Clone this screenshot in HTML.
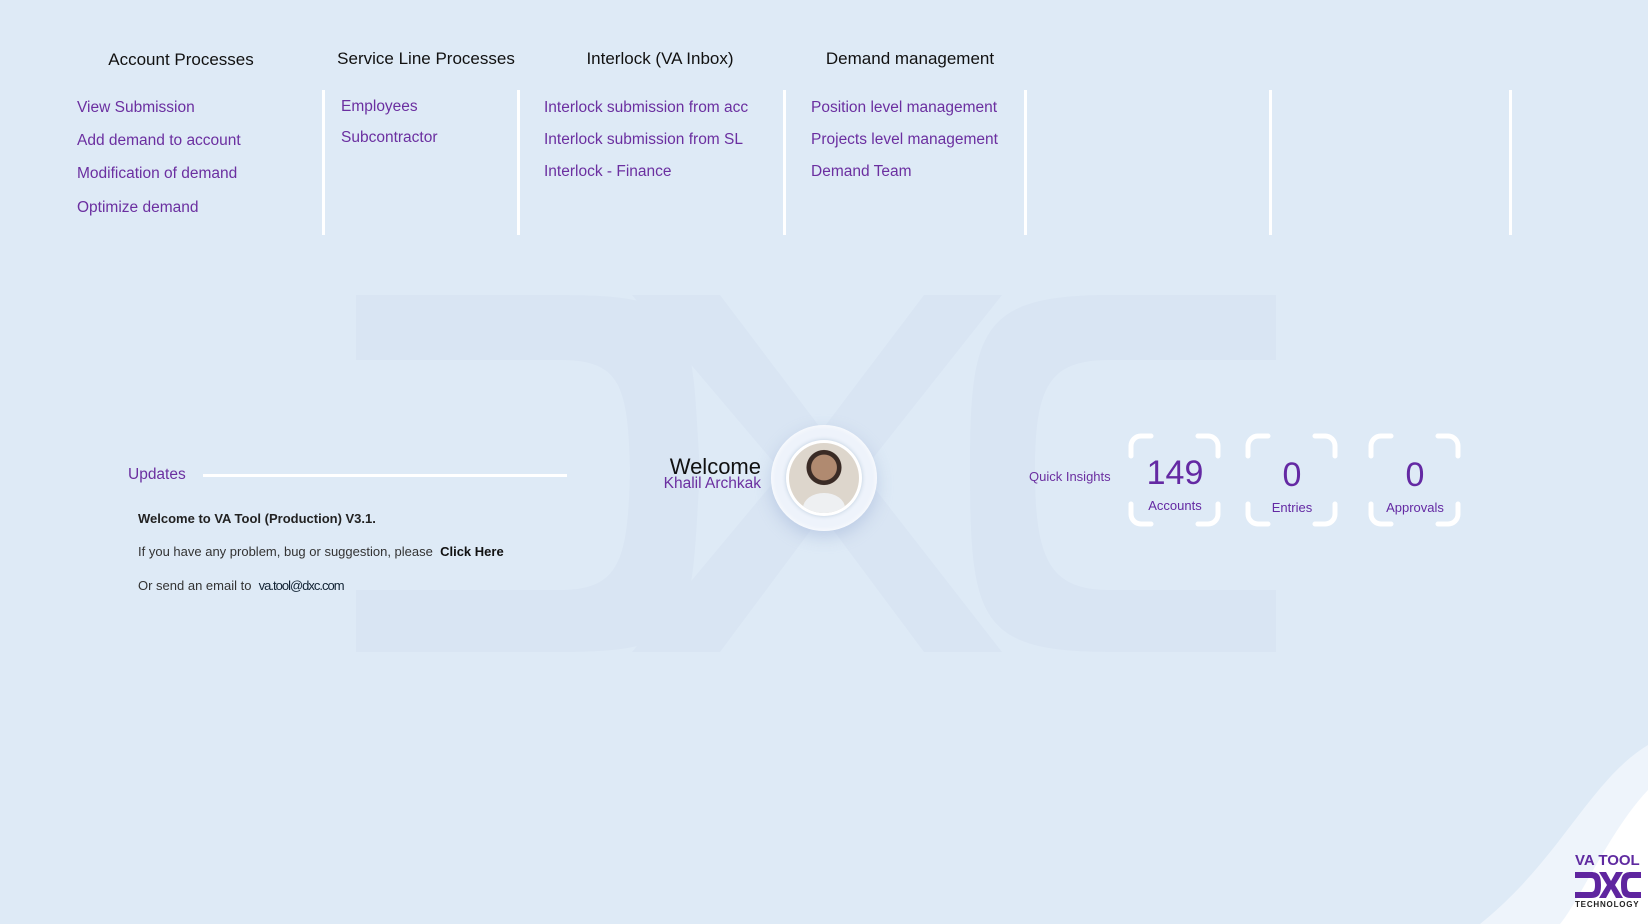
<!DOCTYPE html>
<html><head><meta charset="utf-8"><style>
*{margin:0;padding:0;box-sizing:border-box}
body{width:1648px;height:924px;background:#deeaf6;font-family:"Liberation Sans",sans-serif;position:relative;overflow:hidden}
.a{position:absolute;white-space:nowrap}
.h{font-size:17px;color:#111;transform:translateX(-50%)}
.l{font-size:15.5px;color:#6b2fa0}
.v{position:absolute;width:3px;background:#fff;top:90px;height:145px}
.box{position:absolute;width:92px;height:92px;top:434px}
.num{position:absolute;width:100%;text-align:center;color:#6429a3;font-size:34px;top:22px}
.lab{position:absolute;width:100%;text-align:center;color:#6429a3;font-size:13px;top:62px}
</style></head><body>
<svg class="a" style="left:0;top:0" width="1648" height="924">
<g fill="#d9e5f3">
<path d="M356 295 H560 C700 295 690 320 700 470 C690 625 700 652 560 652 H356 V590 H560 C620 590 628 560 630 470 C628 385 620 360 560 360 H356Z"/>
<path d="M632 295 H720 L822 430 L924 295 H1002 L862 472 L1002 652 H924 L822 515 L720 652 H632 L782 472Z"/>
<path d="M1276 295 H1110 C980 295 970 330 970 470 C970 620 980 652 1110 652 H1276 V590 H1110 C1050 590 1035 560 1035 470 C1035 385 1050 360 1110 360 H1276Z"/>
</g>
<path d="M1648 745 C1590 780 1560 860 1480 924 H1648Z" fill="#eef4fb"/>
<path d="M1648 790 C1610 830 1580 900 1560 924 H1648Z" fill="#fff"/>
</svg>
<div class="a h" style="left:181px;top:50px">Account Processes</div>
<div class="a h" style="left:426px;top:49px">Service Line Processes</div>
<div class="a h" style="left:660px;top:49px">Interlock (VA Inbox)</div>
<div class="a h" style="left:910px;top:49px">Demand management</div>
<div class="a l" style="left:77px;top:99px">View Submission</div>
<div class="a l" style="left:77px;top:132px">Add demand to account</div>
<div class="a l" style="left:77px;top:165px">Modification of demand</div>
<div class="a l" style="left:77px;top:199px">Optimize demand</div>
<div class="a l" style="left:341px;top:98px">Employees</div>
<div class="a l" style="left:341px;top:129px">Subcontractor</div>
<div class="a l" style="left:544px;top:99px">Interlock submission from acc</div>
<div class="a l" style="left:544px;top:131px">Interlock submission from SL</div>
<div class="a l" style="left:544px;top:163px">Interlock - Finance</div>
<div class="a l" style="left:811px;top:99px">Position level management</div>
<div class="a l" style="left:811px;top:131px">Projects level management</div>
<div class="a l" style="left:811px;top:163px">Demand Team</div>
<div class="v" style="left:322px"></div><div class="v" style="left:517px"></div><div class="v" style="left:783px"></div>
<div class="v" style="left:1024px"></div><div class="v" style="left:1269px"></div><div class="v" style="left:1509px"></div>
<div class="a" style="left:128px;top:466px;font-size:15.5px;color:#6b2fa0">Updates</div>
<div class="a" style="left:203px;top:474px;width:364px;height:3px;background:#fff"></div>
<div class="a" style="left:138px;top:511px;font-size:13px;font-weight:bold;color:#222">Welcome to VA Tool (Production) V3.1.</div>
<div class="a" style="left:138px;top:544px;font-size:13px;color:#333">If you have any problem, bug or suggestion, please&nbsp; <b style="color:#111">Click Here</b></div>
<div class="a" style="left:138px;top:578px;font-size:13px;color:#333">Or send an email to&nbsp; <span style="color:#123;letter-spacing:-1px">va.tool@dxc.com</span></div>
<div class="a" style="right:887px;top:454px;font-size:22px;color:#111">Welcome</div>
<div class="a" style="right:887px;top:475px;font-size:15.5px;color:#6b2fa0">Khalil Archkak</div>
<div class="a" style="left:771px;top:425px;width:106px;height:106px;border-radius:50%;background:#eef3fb;box-shadow:0 6px 16px rgba(150,170,210,.45),inset 0 0 6px #fff"></div>
<div class="a" style="left:786px;top:440px;width:76px;height:76px;border-radius:50%;background:#fff;box-shadow:0 0 4px #bcd"></div>
<div class="a" style="left:789px;top:443px;width:70px;height:70px;border-radius:50%;background:radial-gradient(circle at 50% 35%,#b08a70 0 22%,#3a2b25 23% 30%,#ddd6cc 31%);overflow:hidden">
<div style="position:absolute;left:14px;top:50px;width:42px;height:30px;border-radius:50% 50% 0 0;background:#eef0f2"></div></div>
<div class="a" style="left:1029px;top:469px;font-size:13px;color:#6b2fa0">Quick Insights</div>
<svg class="a" style="left:0;top:0" width="1648" height="924" fill="none" stroke="#fff" stroke-width="5" stroke-linecap="round">
<g id="b"><path d="M1131 456 V446 a10 10 0 0 1 10 -10 H1151 M1198 436 H1208 a10 10 0 0 1 10 10 V456 M1218 504 V514 a10 10 0 0 1 -10 10 H1198 M1151 524 H1141 a10 10 0 0 1 -10 -10 V504"/></g>
<use href="#b" x="117"/><use href="#b" x="240"/>
</svg>
<div class="box" style="left:1129px"><div class="num" style="top:20px">149</div><div class="lab" style="top:64px">Accounts</div></div>
<div class="box" style="left:1246px"><div class="num">0</div><div class="lab" style="top:66px">Entries</div></div>
<div class="box" style="left:1369px"><div class="num">0</div><div class="lab" style="top:66px">Approvals</div></div>
<div class="a" style="left:1575px;top:852px;font-size:15px;font-weight:bold;color:#5f2aa0">VA TOOL</div>
<svg class="a" style="left:1575px;top:872px" width="66" height="26"><g fill="#5f259f">
<path d="M0 0H16C24 0 26 4 26 13 26 22 24 26 16 26H0V20H16C19 20 20 18 20 13 20 8 19 6 16 6H0Z"/>
<path d="M24 0H31L36 9 41 0H48L40 13 48 26H41L36 17 31 26H24L32 13Z"/>
<path d="M66 0H56C48 0 46 4 46 13 46 22 48 26 56 26H66V20H56C53 20 52 18 52 13 52 8 53 6 56 6H66Z"/></g></svg>
<div class="a" style="left:1575px;top:900px;font-size:8px;font-weight:bold;letter-spacing:.8px;color:#222">TECHNOLOGY</div>
</body></html>
